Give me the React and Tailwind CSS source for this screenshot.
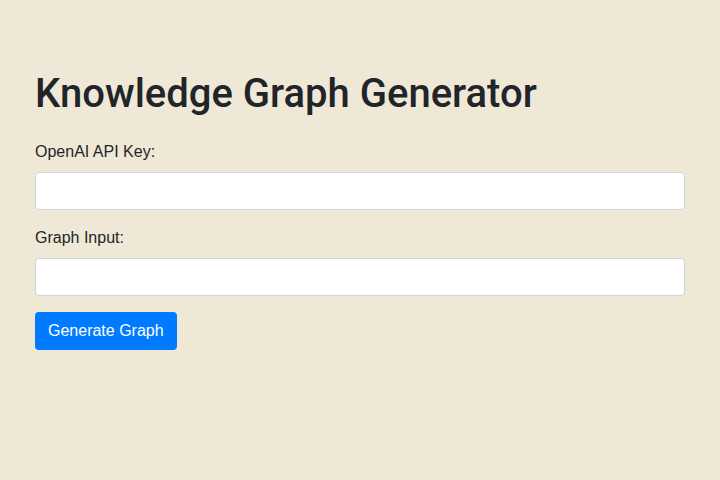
import React from "react";

export default function App() {
  return (
    <div className="min-h-screen w-full bg-[#f0e8d6] font-['Liberation_Sans','Helvetica',sans-serif] text-[#212529]">
      <div className="px-[35px] pt-[70px]">
        <h1 className="font-['Roboto','Liberation_Sans',sans-serif] text-[40px] font-medium leading-[48px] mb-[22px]">
          Knowledge Graph Generator
        </h1>

        {/* API key */}
        <div className="mb-4">
          <label className="block text-base leading-6 mb-2">OpenAI API Key:</label>
          <input
            type="text"
            className="block w-full h-[38px] rounded-[4px] border border-[#ced4da] bg-white px-3 text-base outline-none"
          />
        </div>

        {/* Graph input */}
        <div className="mb-4">
          <label className="block text-base leading-6 mb-2">Graph Input:</label>
          <input
            type="text"
            className="block w-full h-[38px] rounded-[4px] border border-[#ced4da] bg-white px-3 text-base outline-none"
          />
        </div>

        <button className="h-[38px] px-[13px] rounded-[4px] bg-[#007bff] text-white text-base leading-6">
          Generate Graph
        </button>
      </div>
    </div>
  );
}
